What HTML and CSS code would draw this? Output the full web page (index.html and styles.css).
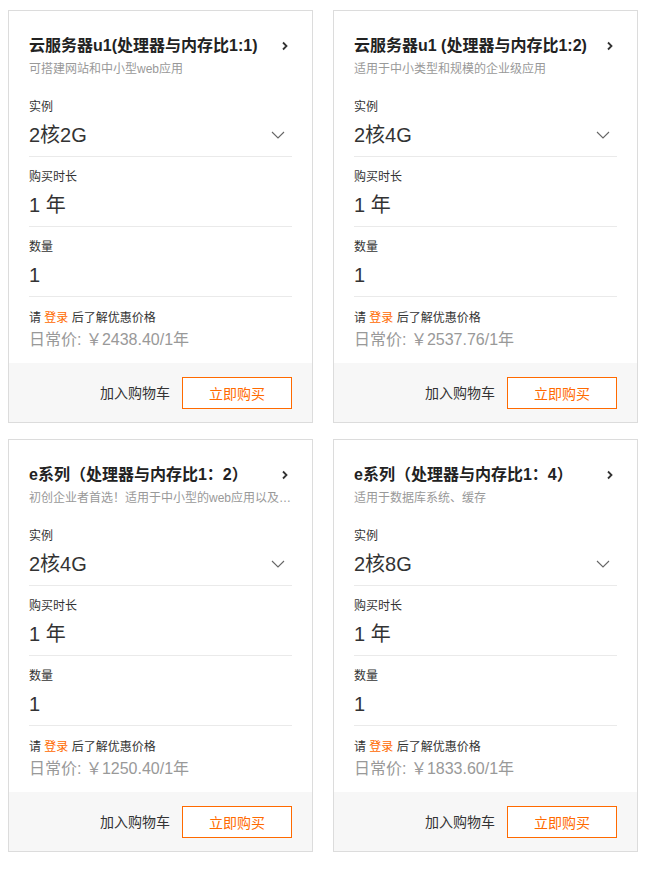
FILE: index.html
```html
<!DOCTYPE html>
<html lang="zh-CN">
<head>
<meta charset="utf-8">
<title>云服务器</title>
<link rel="stylesheet" href="styles.css">
</head>
<body>
<div class="grid">

  <div class="card">
    <div class="body">
      <div class="head">
        <div class="title-row"><span class="title">云服务器u1(处理器与内存比1:1)</span>
          <svg class="arrow" width="8" height="10" viewBox="0 0 8 10"><polyline points="2,1.5 5.5,5 2,8.5" fill="none" stroke="#333" stroke-width="1.8"/></svg></div>
        <div class="sub">可搭建网站和中小型web应用</div>
      </div>
      <div class="field"><div class="label">实例</div><div class="value">2核2G<svg class="down" width="14" height="8" viewBox="0 0 14 8"><polyline points="1,1 7,7 13,1" fill="none" stroke="#666" stroke-width="1.1"/></svg></div></div>
      <div class="field"><div class="label">购买时长</div><div class="value">1 年</div></div>
      <div class="field"><div class="label">数量</div><div class="value">1</div></div>
      <div class="notice">请 <span class="login">登录</span> 后了解优惠价格</div>
      <div class="price">日常价: ￥2438.40/1年</div>
    </div>
    <div class="foot"><span class="cart">加入购物车</span><span class="buy">立即购买</span></div>
  </div>

  <div class="card">
    <div class="body">
      <div class="head">
        <div class="title-row"><span class="title">云服务器u1 (处理器与内存比1:2)</span>
          <svg class="arrow" width="8" height="10" viewBox="0 0 8 10"><polyline points="2,1.5 5.5,5 2,8.5" fill="none" stroke="#333" stroke-width="1.8"/></svg></div>
        <div class="sub">适用于中小类型和规模的企业级应用</div>
      </div>
      <div class="field"><div class="label">实例</div><div class="value">2核4G<svg class="down" width="14" height="8" viewBox="0 0 14 8"><polyline points="1,1 7,7 13,1" fill="none" stroke="#666" stroke-width="1.1"/></svg></div></div>
      <div class="field"><div class="label">购买时长</div><div class="value">1 年</div></div>
      <div class="field"><div class="label">数量</div><div class="value">1</div></div>
      <div class="notice">请 <span class="login">登录</span> 后了解优惠价格</div>
      <div class="price">日常价: ￥2537.76/1年</div>
    </div>
    <div class="foot"><span class="cart">加入购物车</span><span class="buy">立即购买</span></div>
  </div>

  <div class="card">
    <div class="body">
      <div class="head">
        <div class="title-row"><span class="title">e系列（处理器与内存比1：2）</span>
          <svg class="arrow" width="8" height="10" viewBox="0 0 8 10"><polyline points="2,1.5 5.5,5 2,8.5" fill="none" stroke="#333" stroke-width="1.8"/></svg></div>
        <div class="sub">初创企业者首选！适用于中小型的web应用以及…</div>
      </div>
      <div class="field"><div class="label">实例</div><div class="value">2核4G<svg class="down" width="14" height="8" viewBox="0 0 14 8"><polyline points="1,1 7,7 13,1" fill="none" stroke="#666" stroke-width="1.1"/></svg></div></div>
      <div class="field"><div class="label">购买时长</div><div class="value">1 年</div></div>
      <div class="field"><div class="label">数量</div><div class="value">1</div></div>
      <div class="notice">请 <span class="login">登录</span> 后了解优惠价格</div>
      <div class="price">日常价: ￥1250.40/1年</div>
    </div>
    <div class="foot"><span class="cart">加入购物车</span><span class="buy">立即购买</span></div>
  </div>

  <div class="card">
    <div class="body">
      <div class="head">
        <div class="title-row"><span class="title">e系列（处理器与内存比1：4）</span>
          <svg class="arrow" width="8" height="10" viewBox="0 0 8 10"><polyline points="2,1.5 5.5,5 2,8.5" fill="none" stroke="#333" stroke-width="1.8"/></svg></div>
        <div class="sub">适用于数据库系统、缓存</div>
      </div>
      <div class="field"><div class="label">实例</div><div class="value">2核8G<svg class="down" width="14" height="8" viewBox="0 0 14 8"><polyline points="1,1 7,7 13,1" fill="none" stroke="#666" stroke-width="1.1"/></svg></div></div>
      <div class="field"><div class="label">购买时长</div><div class="value">1 年</div></div>
      <div class="field"><div class="label">数量</div><div class="value">1</div></div>
      <div class="notice">请 <span class="login">登录</span> 后了解优惠价格</div>
      <div class="price">日常价: ￥1833.60/1年</div>
    </div>
    <div class="foot"><span class="cart">加入购物车</span><span class="buy">立即购买</span></div>
  </div>

</div>
</body>
</html>
```

FILE: styles.css
```css
* { box-sizing: border-box; }
html, body { margin: 0; padding: 0; background: #fff; }
body {
  font-family: "Liberation Sans", "Noto Sans CJK SC", sans-serif;
  color: #333;
}
.grid {
  display: grid;
  grid-template-columns: 305px 305px;
  column-gap: 20px;
  row-gap: 16px;
  padding: 10px 8px;
}
.card {
  border: 1px solid #dcdcdc;
  background: #fff;
  display: flex;
  flex-direction: column;
}
.body {
  padding: 23px 20px 12px 20px;
}
.head { margin-bottom: 9px; }
.title-row {
  display: flex;
  align-items: center;
  justify-content: space-between;
  height: 24px;
}
.title {
  font-size: 16px;
  font-weight: bold;
  line-height: 24px;
  color: #222;
  white-space: nowrap;
}
.arrow { margin-right: 3px; flex: none; }
.sub {
  margin-top: 2px;
  font-size: 12px;
  line-height: 18px;
  color: #999;
  white-space: nowrap;
}
.field {
  padding: 11px 0 7px 0;
  border-bottom: 1px solid #eaeaea;
}
.label {
  font-size: 12px;
  line-height: 18px;
  color: #333;
}
.value {
  margin-top: 5px;
  font-size: 20px;
  line-height: 28px;
  color: #333;
  display: flex;
  align-items: center;
  justify-content: space-between;
}
.down { margin-right: 7px; }
.notice {
  margin-top: 12px;
  font-size: 12px;
  line-height: 18px;
  color: #333;
}
.login { color: #ff6a00; }
.price {
  margin-top: 2px;
  font-size: 16px;
  line-height: 22px;
  color: #999;
}
.foot {
  background: #f7f7f7;
  height: 59px;
  padding: 0 20px;
  display: flex;
  align-items: center;
  justify-content: flex-end;
  gap: 12px;
}
.cart {
  font-size: 14px;
  line-height: 20px;
  color: #333;
}
.buy {
  width: 110px;
  height: 32px;
  border: 1px solid #ff6a00;
  background: #fff;
  color: #ff6a00;
  font-size: 14px;
  display: flex;
  align-items: center;
  justify-content: center;
}
```
